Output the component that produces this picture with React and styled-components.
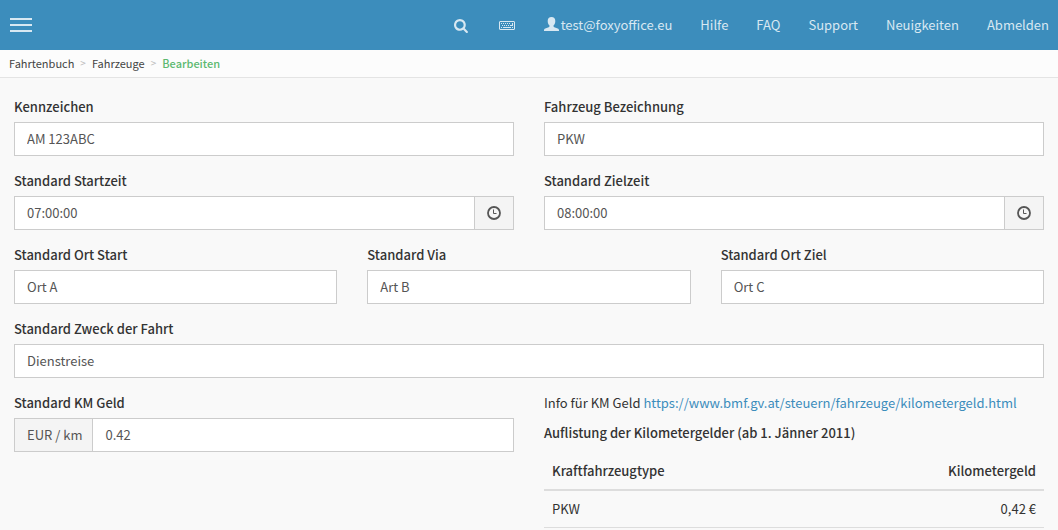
import React from 'react';
import styled, { createGlobalStyle } from 'styled-components';

const GlobalStyle = createGlobalStyle`
  *, *::before, *::after { box-sizing: border-box; }
  body {
    margin: 0;
    background: #f9f9f9;
    color: #333;
    font-family: "Source Sans Pro", "Noto Sans CJK SC", "Noto Sans", sans-serif;
    font-size: 13px;
    line-height: 20px;
  }
  a { color: #3c8dbc; text-decoration: none; }
  input, button { font: inherit; color: inherit; }
`;

const Header = styled.header`
  display: flex;
  align-items: center;
  justify-content: space-between;
  height: 50px;
  padding: 0 9px 0 10px;
  background: #3c8dbc;
`;

const MenuButton = styled.button`
  display: flex;
  flex-direction: column;
  gap: 4px;
  width: 22px;
  padding: 0;
  border: 0;
  background: none;
  cursor: pointer;
`;

const MenuBar = styled.span`
  height: 2px;
  background: #d8e8f2;
`;

const Nav = styled.nav`
  display: flex;
  align-items: center;
  gap: 28px;
`;

const NavLink = styled.a`
  display: flex;
  align-items: center;
  gap: 2px;
  padding: 0 ${(p) => (p.$iconOnly ? 1 : 0)}px;
  color: #d8e8f2;
`;

const Breadcrumb = styled.nav`
  display: flex;
  gap: 6px;
  height: 28px;
  padding: 3px 9px;
  border-bottom: 1px solid #e4e4e4;
  background: #fcfcfc;
  font-size: 11px;
`;

const Crumb = styled.a`
  color: ${(p) => (p.$current ? '#5cb970' : '#444')};
  font-weight: ${(p) => (p.$current ? 500 : 400)};
`;

const Separator = styled.span`
  color: #bbb;
  font-size: 10px;
`;

const Form = styled.form`
  display: flex;
  flex-direction: column;
  gap: 15px;
  padding: 19px 14px 0;
`;

const Row = styled.div`
  display: grid;
  grid-template-columns: repeat(${(p) => p.$columns}, minmax(0, 1fr));
  gap: 30px;
`;

const FieldBox = styled.div`
  display: flex;
  flex-direction: column;
  gap: 5px;
`;

const Label = styled.label`
  font-weight: 500;
`;

const InputGroup = styled.div`
  display: flex;
  height: 34px;
  border: 1px solid #ccc;
  background: #fff;
  color: #555;
`;

const Input = styled.input`
  flex: 1;
  min-width: 0;
  padding: 0 12px;
  border: 0;
  background: none;
`;

const Prefix = styled.span`
  display: flex;
  align-items: center;
  padding: 0 10px 0 12px;
  border-right: 1px solid #ccc;
  background: #f4f4f4;
`;

const PickerButton = styled.button`
  display: flex;
  align-items: center;
  justify-content: center;
  width: 39px;
  padding: 0;
  border: 0;
  border-left: 1px solid #ccc;
  background: #f4f4f4;
  cursor: pointer;
`;

const Info = styled.section`
  display: flex;
  flex-direction: column;
  gap: 10px;
`;

const Paragraph = styled.p`
  margin: 0;
`;

const Heading = styled.h2`
  margin: 0;
  font-size: inherit;
  font-weight: 500;
`;

const Table = styled.table`
  width: 100%;
  border-spacing: 0;
`;

const HeadCell = styled.th`
  padding: 8px;
  border-bottom: 2px solid #ddd;
  font-weight: 500;
  text-align: ${(p) => (p.$right ? 'right' : 'left')};
`;

const Cell = styled.td`
  padding: 8px;
  border-bottom: 1px solid #ddd;
  text-align: ${(p) => (p.$right ? 'right' : 'left')};
`;

const SearchIcon = () => (
  <svg width="15" height="15" viewBox="0 0 1792 1792" fill="currentColor" aria-hidden="true">
    <path d="M1152 832q0-185-131.500-316.500t-316.500-131.500-316.500 131.500-131.500 316.500 131.500 316.500 316.500 131.500 316.500-131.500 131.500-316.500zm512 832q0 52-38 90t-90 38q-54 0-90-38l-343-342q-179 124-399 124-143 0-273.500-55.500t-225-150-150-225-55.500-273.500 55.500-273.500 150-225 225-150 273.500-55.500 273.500 55.500 225 150 150 225 55.500 273.500q0 220-124 399l343 343q37 37 37 90z" />
  </svg>
);

const KeyboardIcon = () => (
  <svg width="16" height="10" viewBox="0 0 16 10" fill="currentColor" aria-hidden="true">
    <rect x="0.500" y="1.500" width="15" height="8" rx="0.500" fill="none" stroke="currentColor" />
    {[2, 4, 6, 8, 10].map((x) => <rect key={x} x={x} y="3" width="1" height="1" />)}
    {[3, 5, 7, 9, 11].map((x) => <rect key={x} x={x} y="5" width="1" height="1" />)}
    <path d="M2 7h1v1H2zM4 7h8v1H4zM13 7h1v1h-1zM13 3h1v3h-2V5h1z" />
  </svg>
);

const UserIcon = () => (
  <svg width="15" height="16" viewBox="0 0 15 16" fill="currentColor" aria-hidden="true">
    <path d="M7.500 0C9.900 0 11.300 1.500 11.300 4C11.300 6 10.600 7.500 9.500 8.500V9.300C9.500 9.800 9.800 10.100 10.300 10.300L13.700 11.500C14.600 11.900 15 12.400 15 13.200V14H0V13.200C0 12.400 0.400 11.900 1.300 11.500L4.700 10.300C5.200 10.100 5.500 9.800 5.500 9.300V8.500C4.400 7.500 3.700 6 3.700 4C3.700 1.500 5.100 0 7.500 0Z" />
  </svg>
);

const ClockIcon = () => (
  <svg width="14" height="14" viewBox="0 0 14 14" fill="none" stroke="currentColor" aria-hidden="true">
    <circle cx="7" cy="7" r="6" strokeWidth="1.800" />
    <path d="M6.500 3.500V7.500H9.500" />
  </svg>
);

const Field = ({ id, label, value, prefix, picker }) => (
  <FieldBox>
    <Label htmlFor={id}>{label}</Label>
    <InputGroup>
      {prefix && <Prefix>{prefix}</Prefix>}
      <Input id={id} type="text" defaultValue={value} />
      {picker && <PickerButton type="button" aria-label={picker}><ClockIcon /></PickerButton>}
    </InputGroup>
  </FieldBox>
);

const NAV_LINKS = ['Hilfe', 'FAQ', 'Support', 'Neuigkeiten', 'Abmelden'];

export default function App() {
  return (
    <>
      <GlobalStyle />
      <Header>
        <MenuButton type="button" aria-label="Menü">
          <MenuBar /><MenuBar /><MenuBar />
        </MenuButton>
        <Nav>
          <NavLink href="#suche" aria-label="Suche" $iconOnly><SearchIcon /></NavLink>
          <NavLink href="#tastatur" aria-label="Tastatur" $iconOnly><KeyboardIcon /></NavLink>
          <NavLink href="#konto"><UserIcon />test@foxyoffice.eu</NavLink>
          {NAV_LINKS.map((name) => (
            <NavLink key={name} href={`#${name.toLowerCase()}`}>{name}</NavLink>
          ))}
        </Nav>
      </Header>
      <Breadcrumb aria-label="Pfad">
        <Crumb href="#fahrtenbuch">Fahrtenbuch</Crumb>
        <Separator>&gt;</Separator>
        <Crumb href="#fahrzeuge">Fahrzeuge</Crumb>
        <Separator>&gt;</Separator>
        <Crumb href="#bearbeiten" $current aria-current="page">Bearbeiten</Crumb>
      </Breadcrumb>
      <Form>
        <Row $columns={2}>
          <Field id="kennzeichen" label="Kennzeichen" value="AM 123ABC" />
          <Field id="bezeichnung" label="Fahrzeug Bezeichnung" value="PKW" />
        </Row>
        <Row $columns={2}>
          <Field id="startzeit" label="Standard Startzeit" value="07:00:00" picker="Startzeit wählen" />
          <Field id="zielzeit" label="Standard Zielzeit" value="08:00:00" picker="Zielzeit wählen" />
        </Row>
        <Row $columns={3}>
          <Field id="ort-start" label="Standard Ort Start" value="Ort A" />
          <Field id="via" label="Standard Via" value="Art B" />
          <Field id="ort-ziel" label="Standard Ort Ziel" value="Ort C" />
        </Row>
        <Row $columns={1}>
          <Field id="zweck" label="Standard Zweck der Fahrt" value="Dienstreise" />
        </Row>
        <Row $columns={2}>
          <Field id="km-geld" label="Standard KM Geld" value="0.42" prefix="EUR / km" />
          <Info>
            <Paragraph>
              Info für KM Geld{' '}
              <a href="https://www.bmf.gv.at/steuern/fahrzeuge/kilometergeld.html">
                https://www.bmf.gv.at/steuern/fahrzeuge/kilometergeld.html
              </a>
            </Paragraph>
            <Heading>Auflistung der Kilometergelder (ab 1. Jänner 2011)</Heading>
            <Table>
              <thead>
                <tr>
                  <HeadCell scope="col">Kraftfahrzeugtype</HeadCell>
                  <HeadCell scope="col" $right>Kilometergeld</HeadCell>
                </tr>
              </thead>
              <tbody>
                <tr>
                  <Cell>PKW</Cell>
                  <Cell $right>0,42 €</Cell>
                </tr>
              </tbody>
            </Table>
          </Info>
        </Row>
      </Form>
    </>
  );
}
